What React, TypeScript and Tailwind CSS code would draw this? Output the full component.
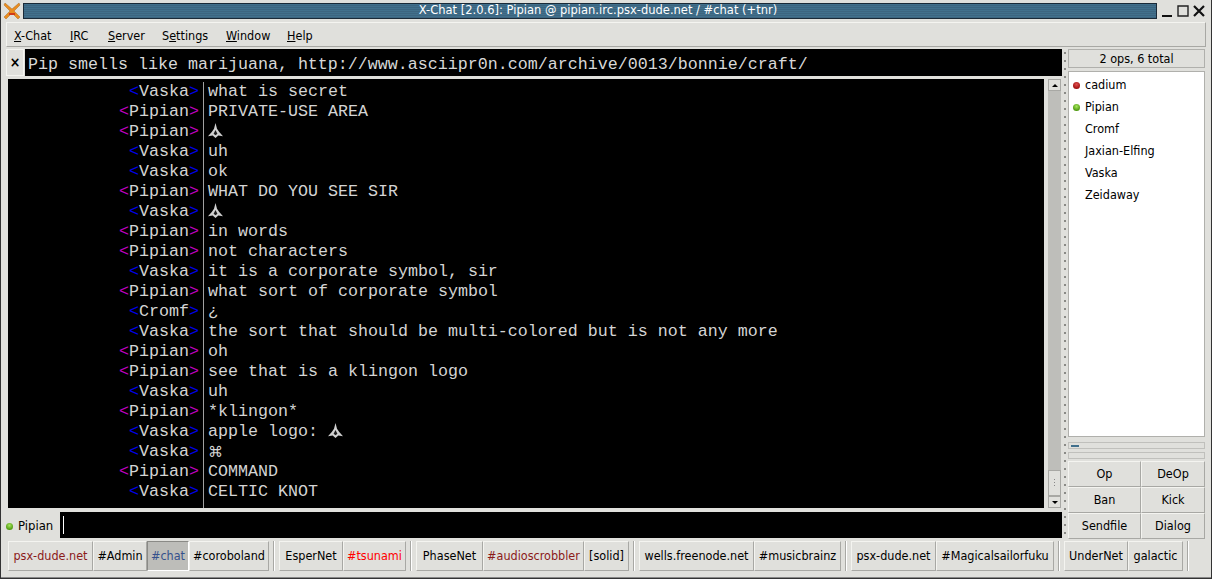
import type { ReactNode } from 'react'

const SANS = "font-['DejaVu_Sans_Condensed','DejaVu_Sans',sans-serif]"

function Klingon() {
  return (
    <svg width="15" height="16" viewBox="0 0 16 17" className="inline-block align-[-3px]">
      <path d="M8 0L9.6 6L12 9.5L16 14L11 13.4L8 16L5 13.4L0 14L4 9.5L6.4 6Z" fill="#d0d0d0" />
      <path d="M8 7.5L10 11.5L8 13L6 11.5Z" fill="#1c1c1c" />
    </svg>
  )
}

const lines: { nick: string; color: string; msg: ReactNode }[] = [
  { nick: 'Vaska', color: 'text-[#0000ee]', msg: 'what is secret' },
  { nick: 'Pipian', color: 'text-[#c000c0]', msg: 'PRIVATE-USE AREA' },
  { nick: 'Pipian', color: 'text-[#c000c0]', msg: <Klingon /> },
  { nick: 'Vaska', color: 'text-[#0000ee]', msg: 'uh' },
  { nick: 'Vaska', color: 'text-[#0000ee]', msg: 'ok' },
  { nick: 'Pipian', color: 'text-[#c000c0]', msg: 'WHAT DO YOU SEE SIR' },
  { nick: 'Vaska', color: 'text-[#0000ee]', msg: <Klingon /> },
  { nick: 'Pipian', color: 'text-[#c000c0]', msg: 'in words' },
  { nick: 'Pipian', color: 'text-[#c000c0]', msg: 'not characters' },
  { nick: 'Vaska', color: 'text-[#0000ee]', msg: 'it is a corporate symbol, sir' },
  { nick: 'Pipian', color: 'text-[#c000c0]', msg: 'what sort of corporate symbol' },
  { nick: 'Cromf', color: 'text-[#0000ee]', msg: '¿' },
  { nick: 'Vaska', color: 'text-[#0000ee]', msg: 'the sort that should be multi-colored but is not any more' },
  { nick: 'Pipian', color: 'text-[#c000c0]', msg: 'oh' },
  { nick: 'Pipian', color: 'text-[#c000c0]', msg: 'see that is a klingon logo' },
  { nick: 'Vaska', color: 'text-[#0000ee]', msg: 'uh' },
  { nick: 'Pipian', color: 'text-[#c000c0]', msg: '*klingon*' },
  { nick: 'Vaska', color: 'text-[#0000ee]', msg: <>apple logo: <Klingon /></> },
  { nick: 'Vaska', color: 'text-[#0000ee]', msg: <span className="font-['DejaVu_Sans',sans-serif] text-[15px]">⌘</span> },
  { nick: 'Pipian', color: 'text-[#c000c0]', msg: 'COMMAND' },
  { nick: 'Vaska', color: 'text-[#0000ee]', msg: 'CELTIC KNOT' },
]

const menus = [
  { pre: '', key: 'X', post: '-Chat', w: 'w-[56px]' },
  { pre: '', key: 'I', post: 'RC', w: 'w-[38px]' },
  { pre: '', key: 'S', post: 'erver', w: 'w-[54px]' },
  { pre: 'S', key: 'e', post: 'ttings', w: 'w-[64px]' },
  { pre: '', key: 'W', post: 'indow', w: 'w-[61px]' },
  { pre: '', key: 'H', post: 'elp', w: 'w-[40px]' },
]

const users = ['cadium', 'Pipian', 'Cromf', 'Jaxian-Elfing', 'Vaska', 'Zeidaway']

const tabGroups = [
  [
    { t: 'psx-dude.net', w: 'w-[85px]', c: 'text-[#8b1a1a]' },
    { t: '#Admin', w: 'w-[54px]', c: 'text-black' },
    { t: '#chat', w: 'w-[42px]', c: 'text-[#35508c]', active: true },
    { t: '#coroboland', w: 'w-[80px]', c: 'text-black' },
  ],
  [
    { t: 'EsperNet', w: 'w-[64px]', c: 'text-black' },
    { t: '#tsunami', w: 'w-[63px]', c: 'text-[#ff0000]' },
  ],
  [
    { t: 'PhaseNet', w: 'w-[67px]', c: 'text-black' },
    { t: '#audioscrobbler', w: 'w-[101px]', c: 'text-[#8b1a1a]' },
    { t: '[solid]', w: 'w-[45px]', c: 'text-black' },
  ],
  [
    { t: 'wells.freenode.net', w: 'w-[115px]', c: 'text-black' },
    { t: '#musicbrainz', w: 'w-[87px]', c: 'text-black' },
  ],
  [
    { t: 'psx-dude.net', w: 'w-[85px]', c: 'text-black' },
    { t: '#Magicalsailorfuku', w: 'w-[118px]', c: 'text-black' },
  ],
  [
    { t: 'UnderNet', w: 'w-[64px]', c: 'text-black' },
    { t: 'galactic', w: 'w-[55px]', c: 'text-black' },
  ],
]

function Dot({ color }: { color: 'red' | 'green' }) {
  return (
    <span
      className={`block w-[7px] h-[7px] rounded-full ${
        color === 'red'
          ? 'bg-[radial-gradient(circle_at_50%_35%,#e05050,#a01010_70%)]'
          : 'bg-[radial-gradient(circle_at_50%_35%,#a8e860,#4f9a10_70%)]'
      }`}
    />
  )
}

function Grip({ className }: { className: string }) {
  return <div className={`bg-[radial-gradient(circle,#8a8a86_1px,transparent_1.5px)] bg-[length:6px_8px] ${className}`} />
}

export default function App() {
  return (
    <div className={`${SANS} w-[1212px] h-[579px] bg-[#e0e0dc] text-[12.5px] text-black flex flex-col overflow-hidden border-b border-x border-[#333] shadow-[inset_0_-1px_0_#888]`}>
      {/* title bar */}
      <div className="h-[21px] flex items-center shrink-0 bg-[#e0e0dc]">
        <svg width="20" height="20" viewBox="0 0 20 20" className="ml-[1px] shrink-0">
          <path d="M3 2L10 8L17 2L18 4L12 10L18 16L16 18L10 12L4 18L2 16L8 10L2 4Z" fill="#ea8c1e" stroke="#a86a20" strokeWidth="0.5" />
          <path d="M7 12h6v2H7z" fill="#d03a1a" />
        </svg>
        <div className="ml-[1px] h-[16px] w-[1134px] border border-[#1a2a38] bg-[repeating-linear-gradient(180deg,#41708c_0px,#41708c_1px,#3c6580_1px,#3c6580_2px)] flex items-center justify-center pl-[16px] font-['DejaVu_Sans',sans-serif] text-[11.5px] text-white">
          X-Chat [2.0.6]: Pipian @ pipian.irc.psx-dude.net / #chat (+tnr)
        </div>
        <div className="ml-[4px] flex items-center gap-[4px] h-[16px]">
          <svg width="12" height="12" viewBox="0 0 12 12"><path d="M1 10h10v2H1z" fill="#111" /></svg>
          <svg width="12" height="12" viewBox="0 0 12 12"><path d="M1 1h10v10H1z" fill="none" stroke="#222" strokeWidth="1.4" /></svg>
          <svg width="12" height="12" viewBox="0 0 12 12"><path d="M1 1l10 10M11 1L1 11" stroke="#111" strokeWidth="2.2" /></svg>
        </div>
      </div>

      {/* menu */}
      <div className="mx-[5px] h-[25px] mt-[1px] border border-[#f4f4f0] border-b-[#a8a8a4] border-r-[#a8a8a4] flex items-center pl-[7px] pt-[3px] shrink-0">
        {menus.map((m) => (
          <span key={m.key} className={`${m.w} shrink-0`}>
            {m.pre}<span className="underline">{m.key}</span>{m.post}
          </span>
        ))}
      </div>

      <div className="flex-1 flex pl-[5px] pr-[6px] mt-[2px] min-h-0">
        {/* left column */}
        <div className="w-[1056px] flex flex-col">
          <div className="h-[27px] flex shrink-0">
            <div className="w-[18px] flex items-center justify-center font-bold text-[14px] border border-[#f4f4f0]">×</div>
            <div className="ml-[1px] flex-1 bg-black text-[#d8d8d8] font-['Liberation_Mono',monospace] text-[16.67px] leading-[30px] pt-[1px] pl-[3px] whitespace-pre overflow-hidden">
              Pip smells like marijuana, http://www.asciipr0n.com/archive/0013/bonnie/craft/
            </div>
          </div>
          <div className="h-[429px] mt-[3px] flex shrink-0">
            <div className="w-[1036px] ml-[2px] bg-black flex pt-[3px] font-['Liberation_Mono',monospace] text-[16.67px] leading-[20px] text-[#d4d4d4] shrink-0">
              <div className="w-[196px] border-r border-[#a0a0a0] pr-[4px] shrink-0 h-full">
                {lines.map((l, i) => (
                  <div key={i} className="h-[20px] text-right whitespace-pre">
                    <span className={l.color}>&lt;</span>{l.nick}<span className={l.color}>&gt;</span>
                  </div>
                ))}
              </div>
              <div className="pl-[4px] flex-1">
                {lines.map((l, i) => (
                  <div key={i} className="h-[20px] whitespace-pre">{l.msg}</div>
                ))}
              </div>
            </div>
            {/* scrollbar */}
            <div className="ml-[4px] w-[13px] bg-[#bebeba] flex flex-col justify-between shrink-0">
              <div className="h-[12px] bg-[#e0e0dc] border border-[#a8a8a4] flex items-center justify-center">
                <span className="block border-x-[3px] border-x-transparent border-b-[3px] border-b-black" />
              </div>
              <div className="flex-1 flex flex-col justify-end">
                <div className="h-[26px] bg-[#e0e0dc] border border-[#a8a8a4] flex items-center justify-center">
                  <span className="w-[3px] h-[10px] bg-[radial-gradient(circle,#888_1px,transparent_1px)] bg-[length:3px_3px]" />
                </div>
              </div>
              <div className="h-[12px] bg-[#e0e0dc] border border-[#a8a8a4] flex items-center justify-center">
                <span className="block border-x-[3px] border-x-transparent border-t-[3px] border-t-black" />
              </div>
            </div>
          </div>
          <div className="h-[26px] mt-[4px] flex shrink-0">
            <div className="w-[54px] flex items-center gap-[5px] text-[13px] pt-[2px] shrink-0">
              <Dot color="green" />
              Pipian
            </div>
            <div className="flex-1 bg-black flex items-center pl-[3px]">
              <span className="block w-[1px] h-[18px] bg-white" />
            </div>
          </div>
        </div>

        <Grip className="w-[6px] h-[489px] shrink-0" />

        {/* right panel */}
        <div className="w-[137px] flex flex-col shrink-0">
          <div className="h-[19px] border border-[#b0b0ac] flex items-center justify-center pt-[1px] shrink-0">2 ops, 6 total</div>
          <div className="h-[366px] mt-[3px] bg-white border border-[#b0b0ac] pt-[2px] shrink-0">
            {users.map((u, i) => (
              <div key={u} className="h-[22px] flex items-center">
                <span className="w-[16px] pl-[4px] shrink-0">
                  {i === 0 && <Dot color="red" />}
                  {i === 1 && <Dot color="green" />}
                </span>
                {u}
              </div>
            ))}
          </div>
          <div className="h-[7px] mt-[5px] border border-[#c0c0bc] pl-[2px] flex items-center shrink-0">
            <span className="block w-[8px] h-[2px] bg-[#41708c]" />
          </div>
          <div className="h-[7px] mt-[3px] border border-[#c0c0bc] shrink-0" />
          <div className="grid grid-cols-[73px_64px] grid-rows-3 mt-[2px] h-[78px] shrink-0">
            {['Op', 'DeOp', 'Ban', 'Kick', 'Sendfile', 'Dialog'].map((b) => (
              <div key={b} className="border border-[#f4f4f0] border-r-[#a8a8a4] border-b-[#a8a8a4] flex items-center justify-center pt-[1px]">{b}</div>
            ))}
          </div>
        </div>
      </div>

      {/* tabs */}
      <div className="h-[34px] flex items-start pl-[7px] pt-[2px] shrink-0 mb-[5px]">
        {tabGroups.map((g, i) => (
          <div key={i} className="flex items-start">
            {g.map((t) => (
              <div
                key={t.t + t.c}
                className={`${t.w} ${t.c} h-[30px] shrink-0 flex items-center justify-center pt-[1px] border ${
                  t.active
                    ? 'bg-[#bdbdb9] border-[#8a8a86] border-r-white border-b-white'
                    : 'border-[#f4f4f0] border-r-[#a8a8a4] border-b-[#a8a8a4]'
                }`}
              >
                {t.t}
              </div>
            ))}
            <span className="block ml-[4px] mr-[4px] w-[2px] h-[30px] border-l border-[#a8a8a4] border-r border-r-white" />
          </div>
        ))}
      </div>
    </div>
  )
}
